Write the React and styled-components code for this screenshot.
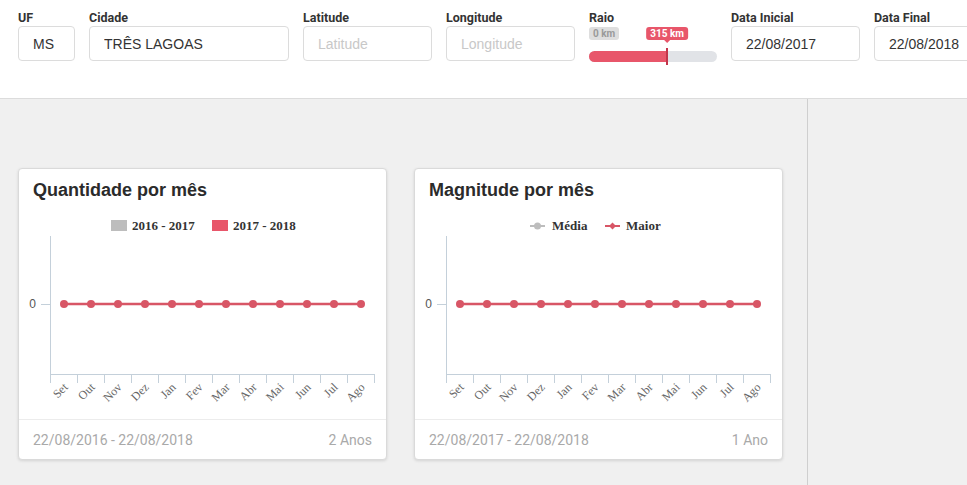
import React from "react";
import styled, { createGlobalStyle } from "styled-components";

const GlobalStyle = createGlobalStyle`
  html, body {
    margin: 0;
    padding: 0;
    background: #f0f0f0;
    overflow: hidden;
  }
  body {
    font-family: "Roboto", "Liberation Sans", Arial, sans-serif;
  }
`;

const Page = styled.div`
  width: 967px;
  height: 485px;
  display: flex;
  flex-direction: column;
  background: #f0f0f0;
`;

const Filters = styled.div`
  display: flex;
  gap: 14px;
  height: 99px;
  padding: 10px 18px 0;
  box-sizing: border-box;
  background: #ffffff;
  border-bottom: 1px solid #dcdcdc;
  overflow: hidden;
  flex-shrink: 0;
`;

const Field = styled.div`
  display: flex;
  flex-direction: column;
  width: ${(p) => p.width}px;
  flex-shrink: 0;
`;

const Label = styled.label`
  font-family: "Roboto", "Liberation Sans", sans-serif;
  font-weight: 700;
  font-size: 12.5px;
  line-height: 15px;
  color: #333;
  margin-bottom: 1px;
`;

const Input = styled.input`
  box-sizing: border-box;
  width: 100%;
  height: 35px;
  padding: 0 14px;
  border: 1px solid #dcdcdc;
  border-radius: 4px;
  font-family: "Liberation Sans", Arial, sans-serif;
  font-size: 14px;
  color: #333;
  background: #fff;
  outline: none;

  &::placeholder {
    color: #c8c8c8;
  }
`;

const SliderBox = styled.div`
  position: relative;
  height: 35px;
`;

const Track = styled.div`
  position: absolute;
  left: 0;
  right: 0;
  top: 25px;
  height: 11px;
  border-radius: 6px;
  background: #e1e3e7;
  overflow: hidden;
`;

const Fill = styled.div`
  height: 100%;
  background: #e8566a;
`;

const Handle = styled.div`
  position: absolute;
  top: 22px;
  width: 2px;
  height: 17px;
  margin-left: -1px;
  background: #c2354a;
`;

const Badge = styled.div`
  position: absolute;
  top: 1px;
  height: 13px;
  padding: 0 4px;
  border-radius: 3px;
  font-family: "Roboto", "Liberation Sans", sans-serif;
  font-weight: 700;
  font-size: 10px;
  line-height: 13px;
  white-space: nowrap;
  background: ${(p) => (p.$active ? "#e8566a" : "#dedede")};
  color: ${(p) => (p.$active ? "#fff" : "#9a9a9a")};
  transform: ${(p) => (p.$active ? "translateX(-50%)" : "none")};

  &::after {
    content: "";
    display: ${(p) => (p.$active ? "block" : "none")};
    position: absolute;
    left: 50%;
    bottom: -3px;
    margin-left: -3px;
    border-left: 3px solid transparent;
    border-right: 3px solid transparent;
    border-top: 3px solid #e8566a;
  }
`;

const Body = styled.div`
  flex: 1;
  display: flex;
`;

const Main = styled.div`
  width: 808px;
  box-sizing: border-box;
  border-right: 1px solid #cfcfcf;
  padding: 69px 18px 0;
  display: flex;
  gap: 27px;
  align-items: flex-start;
`;

const Card = styled.div`
  width: 369px;
  height: 292px;
  box-sizing: border-box;
  background: #fff;
  border: 1px solid #dadada;
  border-radius: 4px;
  box-shadow: 0 1px 3px rgba(0, 0, 0, 0.12);
  display: flex;
  flex-direction: column;
`;

const CardTitle = styled.div`
  box-sizing: border-box;
  padding: 10px 14px 0;
  height: 31px;
  font-family: "Liberation Sans", Arial, sans-serif;
  font-weight: 700;
  font-size: 18px;
  line-height: 22px;
  color: #2b2b2b;
`;

const ChartArea = styled.svg`
  display: block;
  flex-shrink: 0;
`;

const CardFooter = styled.div`
  box-sizing: border-box;
  height: 40px;
  border-top: 1px solid #ececec;
  display: flex;
  align-items: center;
  justify-content: space-between;
  padding: 0 14px;
  font-family: "Roboto", "Liberation Sans", sans-serif;
  font-size: 14px;
  color: #a9a9a9;
`;

const Sidebar = styled.div`
  flex: 1;
`;

const months = ["Set", "Out", "Nov", "Dez", "Jan", "Fev", "Mar", "Abr", "Mai", "Jun", "Jul", "Ago"];

const RED = "#d85666";
const GRAY = "#bdbdbd";
const AXIS = "#c4d0da";
const SERIF = "'Liberation Serif', 'Times New Roman', serif";

function Legend({ kind }) {
  const serif = { fontFamily: SERIF, fontWeight: 700, fontSize: 13, fill: "#333" };
  if (kind === "bars") {
    return (
      <g>
        <rect x="92" y="20" width="16" height="11" fill={GRAY} />
        <text x="113" y="30" style={serif}>2016 - 2017</text>
        <rect x="193" y="20" width="16" height="11" fill="#e8566a" />
        <text x="214" y="30" style={serif}>2017 - 2018</text>
      </g>
    );
  }
  return (
    <g>
      <line x1="115" y1="26" x2="130" y2="26" stroke={GRAY} strokeWidth="2" />
      <circle cx="122.5" cy="26" r="3.5" fill={GRAY} />
      <text x="137" y="30" style={serif}>Média</text>
      <line x1="190" y1="26" x2="205" y2="26" stroke={RED} strokeWidth="2" />
      <path d="M197.5 22.5 L201 26 L197.5 29.5 L194 26 Z" fill={RED} />
      <text x="211" y="30" style={serif}>Maior</text>
    </g>
  );
}

function MonthChart({ legend }) {
  const x0 = 31.5;
  const step = 27;
  const ticks = Array.from({ length: 13 }, (_, i) => x0 + i * step);
  return (
    <ChartArea width="367" height="219" viewBox="0 0 367 219">
      <Legend kind={legend} />
      <line x1={x0} y1="36" x2={x0} y2="174" stroke={AXIS} strokeWidth="1" />
      <line x1={x0} y1="174.5" x2={x0 + 12 * step + 0.5} y2="174.5" stroke={AXIS} strokeWidth="1" />
      {ticks.map((t) => (
        <line key={t} x1={t} y1="174" x2={t} y2="183" stroke={AXIS} strokeWidth="1" />
      ))}
      <line x1="22" y1="104.5" x2={x0} y2="104.5" stroke={AXIS} strokeWidth="1" />
      <text x="17" y="108" textAnchor="end" fontFamily="'Liberation Sans', Arial, sans-serif" fontSize="12" fill="#555">0</text>
      <line x1={x0 + 13.5} y1="104" x2={x0 + 13.5 + 11 * step} y2="104" stroke={RED} strokeWidth="2.5" />
      {months.map((m, i) => (
        <circle key={m} cx={x0 + 13.5 + i * step} cy="104" r="4" fill={RED} />
      ))}
      {months.map((m, i) => (
        <text
          key={m}
          transform={`translate(${x0 + 18 + i * step}, 188) rotate(-45)`}
          textAnchor="end"
          fontFamily={SERIF}
          fontSize="12"
          fill="#666"
        >
          {m}
        </text>
      ))}
    </ChartArea>
  );
}

function ChartCard({ title, legend, period, span }) {
  return (
    <Card>
      <CardTitle>{title}</CardTitle>
      <MonthChart legend={legend} />
      <CardFooter>
        <span>{period}</span>
        <span>{span}</span>
      </CardFooter>
    </Card>
  );
}

export default function App() {
  return (
    <Page>
      <GlobalStyle />
      <Filters>
        <Field width={57}>
          <Label>UF</Label>
          <Input defaultValue="MS" />
        </Field>
        <Field width={200}>
          <Label>Cidade</Label>
          <Input defaultValue="TRÊS LAGOAS" />
        </Field>
        <Field width={129}>
          <Label>Latitude</Label>
          <Input placeholder="Latitude" />
        </Field>
        <Field width={129}>
          <Label>Longitude</Label>
          <Input placeholder="Longitude" />
        </Field>
        <Field width={128}>
          <Label>Raio</Label>
          <SliderBox>
            <Badge style={{ left: 0 }}>0 km</Badge>
            <Track>
              <Fill style={{ width: "61%" }} />
            </Track>
            <Handle style={{ left: "61%" }} />
            <Badge $active style={{ left: "61%" }}>315 km</Badge>
          </SliderBox>
        </Field>
        <Field width={129}>
          <Label>Data Inicial</Label>
          <Input defaultValue="22/08/2017" />
        </Field>
        <Field width={129}>
          <Label>Data Final</Label>
          <Input defaultValue="22/08/2018" />
        </Field>
      </Filters>
      <Body>
        <Main>
          <ChartCard title="Quantidade por mês" legend="bars" period="22/08/2016 - 22/08/2018" span="2 Anos" />
          <ChartCard title="Magnitude por mês" legend="lines" period="22/08/2017 - 22/08/2018" span="1 Ano" />
        </Main>
        <Sidebar />
      </Body>
    </Page>
  );
}
